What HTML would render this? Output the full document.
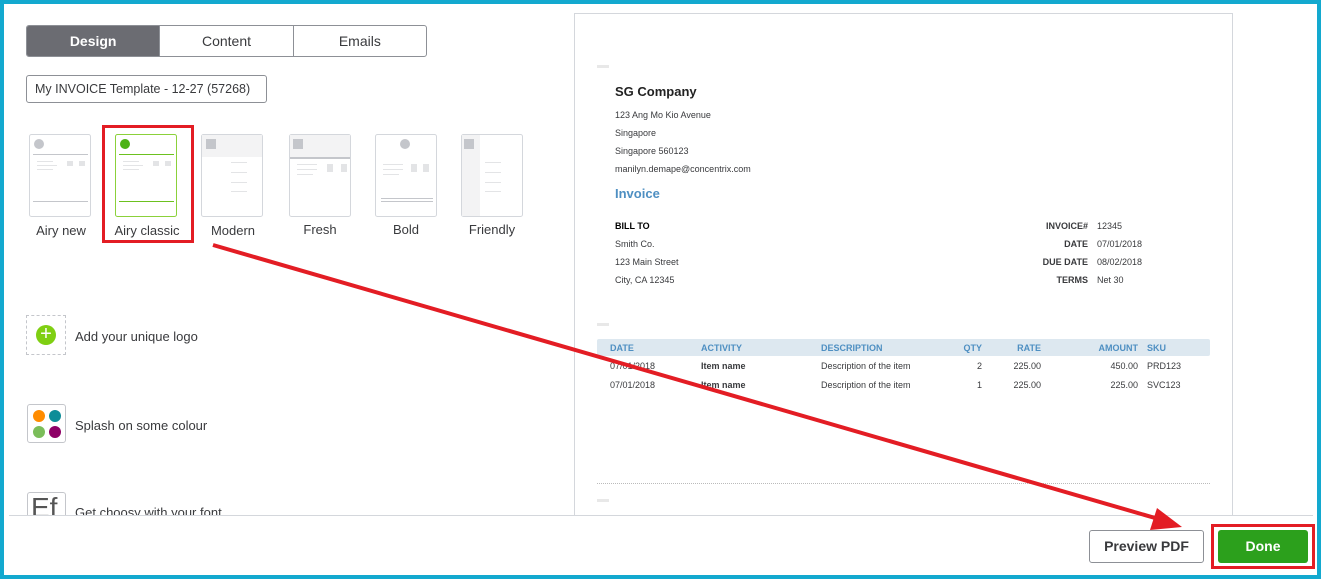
<!DOCTYPE html>
<html><head><meta charset="utf-8"><style>
*{margin:0;padding:0;box-sizing:border-box}
body{width:1321px;height:579px;overflow:hidden;background:#fff;font-family:"Liberation Sans",sans-serif;position:relative}
.frame{position:absolute;left:0;top:0;width:1321px;height:579px;border:4px solid #13a9cf;}
.a{position:absolute;white-space:nowrap}
.tabs{left:26px;top:25px;width:401px;height:32px;border:1px solid #8d9096;border-radius:3px;display:flex;overflow:hidden}
.tabs div{flex:1;text-align:center;line-height:30px;font-size:14px;color:#393a3d;border-left:1px solid #8d9096}
.tabs div:first-child{border-left:none;background:#6b6c72;color:#fff;font-weight:bold}
.inp{left:26px;top:75px;width:241px;height:28px;border:1px solid #8d9096;border-radius:3px;font-size:12.5px;color:#393a3d;line-height:26px;padding-left:8px}
.lbl{font-size:13px;color:#393a3d;text-align:center;width:80px}
.f{font-size:13px;color:#393a3d}
.p{font-size:9px;color:#393a3d}
.b{font-weight:bold}
.h{font-size:9px;color:#4e8fc2;font-weight:bold}
</style></head><body>
<div class="a tabs"><div>Design</div><div>Content</div><div>Emails</div></div>
<div class="a inp">My INVOICE Template - 12-27 (57268)</div>

<svg class="a" style="left:27px;top:132px" width="500" height="88">
<g fill="none" stroke="#d4d7dc">
<rect x="2.5" y="2.5" width="61" height="82" rx="2"/>
<rect x="88.5" y="2.5" width="61" height="82" rx="2" stroke="#8bd13a"/>
<rect x="174.5" y="2.5" width="61" height="82" rx="2"/>
<rect x="262.5" y="2.5" width="61" height="82" rx="2"/>
<rect x="348.5" y="2.5" width="61" height="82" rx="2"/>
<rect x="434.5" y="2.5" width="61" height="82" rx="2"/>
</g>
<circle cx="12" cy="12" r="5" fill="#c4c6cb"/>
<rect x="6" y="22" width="55" height="1" fill="#c4c6cb"/><rect x="6" y="69" width="55" height="1" fill="#c4c6cb"/>
<circle cx="98" cy="12" r="5" fill="#4cb214"/>
<rect x="92" y="22" width="55" height="1" fill="#6cc11f"/><rect x="92" y="69" width="55" height="1" fill="#6cc11f"/>
<rect x="175" y="3" width="60" height="22" fill="#f3f3f4"/><rect x="179" y="7" width="10" height="10" fill="#c4c6cb"/>
<rect x="263" y="3" width="60" height="22" fill="#f3f3f4"/><rect x="266" y="7" width="10" height="10" fill="#c4c6cb"/><rect x="263" y="25" width="60" height="2" fill="#c4c6cb"/>
<circle cx="378" cy="12" r="5" fill="#c4c6cb"/><rect x="354" y="66" width="52" height="1" fill="#c4c6cb"/><rect x="354" y="69" width="52" height="1" fill="#c4c6cb"/>
<rect x="435" y="3" width="18" height="81" fill="#f3f3f4"/><rect x="437" y="7" width="10" height="10" fill="#c4c6cb"/>
<g fill="#e3e4e6">
<rect x="10" y="29" width="16" height="1"/><rect x="10" y="33" width="20" height="1"/><rect x="10" y="37" width="16" height="1"/><rect x="40" y="29" width="6" height="5"/><rect x="52" y="29" width="6" height="5"/>
<rect x="96" y="29" width="16" height="1"/><rect x="96" y="33" width="20" height="1"/><rect x="96" y="37" width="16" height="1"/><rect x="126" y="29" width="6" height="5"/><rect x="138" y="29" width="6" height="5"/>
<rect x="204" y="30" width="16" height="1"/><rect x="204" y="40" width="16" height="1"/><rect x="204" y="50" width="16" height="1"/><rect x="204" y="59" width="16" height="1"/>
<rect x="270" y="32" width="20" height="1"/><rect x="270" y="37" width="20" height="1"/><rect x="270" y="42" width="16" height="1"/><rect x="300" y="32" width="6" height="8"/><rect x="314" y="32" width="6" height="8"/>
<rect x="356" y="32" width="20" height="1"/><rect x="356" y="37" width="20" height="1"/><rect x="356" y="42" width="16" height="1"/><rect x="384" y="32" width="6" height="8"/><rect x="396" y="32" width="6" height="8"/>
<rect x="458" y="30" width="16" height="1"/><rect x="458" y="40" width="16" height="1"/><rect x="458" y="50" width="16" height="1"/><rect x="458" y="59" width="16" height="1"/>
</g>
</svg>
<div class="a lbl" style="left:21px;top:223px">Airy new</div>
<div class="a lbl" style="left:107px;top:223px">Airy classic</div>
<div class="a lbl" style="left:193px;top:223px">Modern</div>
<div class="a lbl" style="left:280px;top:222px">Fresh</div>
<div class="a lbl" style="left:366px;top:222px">Bold</div>
<div class="a lbl" style="left:452px;top:222px">Friendly</div>
<div class="a" style="left:102px;top:125px;width:92px;height:118px;border:3px solid #e31d24"></div>

<div class="a" style="left:26px;top:315px;width:40px;height:40px;border:1px dashed #c4c6cb"></div>
<div class="a" style="left:36px;top:325px;width:20px;height:20px;border-radius:50%;background:#7fcf12;color:#fff;font-size:20px;line-height:19px;text-align:center">+</div>
<div class="a f" style="left:75px;top:329px">Add your unique logo</div>
<div class="a" style="left:27px;top:404px;width:39px;height:39px;border:1px solid #c4c6cb;border-radius:3px"></div>
<svg class="a" style="left:27px;top:404px" width="40" height="40"><circle cx="12" cy="12" r="6" fill="#ff8c00"/><circle cx="28" cy="12" r="6" fill="#0d8d98"/><circle cx="12" cy="28" r="6" fill="#7bbd5a"/><circle cx="28" cy="28" r="6" fill="#8e0066"/></svg>
<div class="a f" style="left:75px;top:418px">Splash on some colour</div>
<div class="a" style="left:27px;top:492px;width:39px;height:23px;border:1px solid #c4c6cb;border-bottom:none;border-radius:3px 3px 0 0;overflow:hidden;font-size:28px;color:#555;line-height:30px;padding-left:3px">Ef</div>
<div class="a f" style="left:75px;top:505px;height:10px;overflow:hidden">Get choosy with your font</div>

<div class="a" style="left:574px;top:13px;width:659px;height:503px;border:1px solid #d4d7dc;border-bottom:none"></div>
<div class="a" style="left:597px;top:65px;width:12px;height:3px;background:#e8e8e8"></div>
<div class="a" style="left:615px;top:84px;font-size:13px;font-weight:bold;color:#222">SG Company</div>
<div class="a p" style="left:615px;top:110px">123 Ang Mo Kio Avenue</div>
<div class="a p" style="left:615px;top:128px">Singapore</div>
<div class="a p" style="left:615px;top:146px">Singapore 560123</div>
<div class="a p" style="left:615px;top:164px">manilyn.demape@concentrix.com</div>
<div class="a" style="left:615px;top:186px;font-size:13px;font-weight:bold;color:#4e8fc2">Invoice</div>
<div class="a p b" style="left:615px;top:221px;color:#000">BILL TO</div>
<div class="a p" style="left:615px;top:239px">Smith Co.</div>
<div class="a p" style="left:615px;top:257px">123 Main Street</div>
<div class="a p" style="left:615px;top:275px">City, CA 12345</div>
<div class="a p b" style="left:1000px;width:88px;text-align:right;top:221px">INVOICE#</div>
<div class="a p b" style="left:1000px;width:88px;text-align:right;top:239px">DATE</div>
<div class="a p b" style="left:1000px;width:88px;text-align:right;top:257px">DUE DATE</div>
<div class="a p b" style="left:1000px;width:88px;text-align:right;top:275px">TERMS</div>
<div class="a p" style="left:1097px;top:221px">12345</div>
<div class="a p" style="left:1097px;top:239px">07/01/2018</div>
<div class="a p" style="left:1097px;top:257px">08/02/2018</div>
<div class="a p" style="left:1097px;top:275px">Net 30</div>
<div class="a" style="left:597px;top:323px;width:12px;height:3px;background:#e8e8e8"></div>
<div class="a" style="left:597px;top:339px;width:613px;height:17px;background:#dde8f0;border-radius:2px"></div>
<div class="a h" style="left:610px;top:343px">DATE</div>
<div class="a h" style="left:701px;top:343px">ACTIVITY</div>
<div class="a h" style="left:821px;top:343px">DESCRIPTION</div>
<div class="a h" style="left:940px;width:42px;text-align:right;top:343px">QTY</div>
<div class="a h" style="left:990px;width:51px;text-align:right;top:343px">RATE</div>
<div class="a h" style="left:1060px;width:78px;text-align:right;top:343px">AMOUNT</div>
<div class="a h" style="left:1147px;top:343px">SKU</div>
<div class="a p" style="left:610px;top:361px">07/01/2018</div><div class="a p b" style="left:701px;top:361px">Item name</div><div class="a p" style="left:821px;top:361px">Description of the item</div><div class="a p" style="left:940px;width:42px;text-align:right;top:361px">2</div><div class="a p" style="left:990px;width:51px;text-align:right;top:361px">225.00</div><div class="a p" style="left:1060px;width:78px;text-align:right;top:361px">450.00</div><div class="a p" style="left:1147px;top:361px">PRD123</div>
<div class="a p" style="left:610px;top:380px">07/01/2018</div><div class="a p b" style="left:701px;top:380px">Item name</div><div class="a p" style="left:821px;top:380px">Description of the item</div><div class="a p" style="left:940px;width:42px;text-align:right;top:380px">1</div><div class="a p" style="left:990px;width:51px;text-align:right;top:380px">225.00</div><div class="a p" style="left:1060px;width:78px;text-align:right;top:380px">225.00</div><div class="a p" style="left:1147px;top:380px">SVC123</div>
<div class="a" style="left:597px;top:483px;width:613px;border-top:1px dotted #bbb"></div>
<div class="a" style="left:597px;top:499px;width:12px;height:3px;background:#e8e8e8"></div>

<div class="a" style="left:9px;top:515px;width:1304px;height:1px;background:#d4d7dc"></div>
<div class="a" style="left:1089px;top:530px;width:115px;height:33px;border:1px solid #8d9096;border-radius:3px;text-align:center;line-height:31px;font-size:14px;font-weight:bold;color:#393a3d">Preview PDF</div>
<div class="a" style="left:1211px;top:524px;width:104px;height:45px;border:3px solid #e31d24"></div>
<div class="a" style="left:1218px;top:530px;width:90px;height:33px;background:#2ca01c;border-radius:3px;text-align:center;line-height:33px;font-size:14px;font-weight:bold;color:#fff">Done</div>

<svg class="a" style="left:0;top:0" width="1321" height="579"><line x1="213" y1="245" x2="1162" y2="520" stroke="#e31d24" stroke-width="4"/><polygon points="1182,527 1157,508 1150,530" fill="#e31d24"/></svg>
<div class="frame"></div>
</body></html>
